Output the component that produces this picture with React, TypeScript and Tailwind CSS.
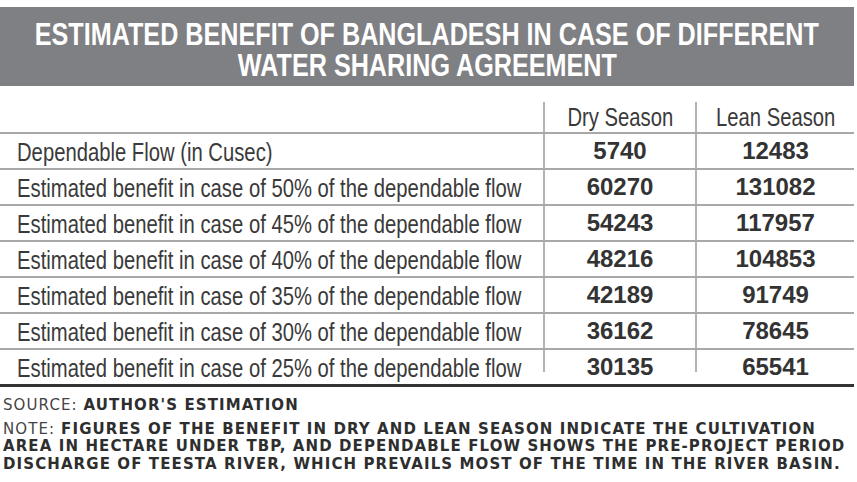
const rows: [string, string, string][] = [
  ["Dependable Flow (in Cusec)", "5740", "12483"],
  ["Estimated benefit in case of 50% of the dependable flow", "60270", "131082"],
  ["Estimated benefit in case of 45% of the dependable flow", "54243", "117957"],
  ["Estimated benefit in case of 40% of the dependable flow", "48216", "104853"],
  ["Estimated benefit in case of 35% of the dependable flow", "42189", "91749"],
  ["Estimated benefit in case of 30% of the dependable flow", "36162", "78645"],
  ["Estimated benefit in case of 25% of the dependable flow", "30135", "65541"],
];

// no condensed face installed, so the narrow look is a horizontal squeeze
const cond = "inline-block whitespace-nowrap font-['Liberation_Sans',sans-serif]";
const numFont = "font-['Liberation_Sans',sans-serif] font-bold text-[24px] text-[#333333]";

function App(): JSX.Element {
  const last = rows.length - 1;
  return (
    <div className="h-[482px] w-[857px] overflow-hidden bg-white text-[#3a3a3a]">
      <div className="mt-[7px] flex h-[79px] w-[854px] flex-col items-center bg-[#7f8083] pt-[12px] text-[31px] font-bold leading-[31px] text-white">
        <span className={`${cond} origin-center scale-x-[0.812]`}>
          ESTIMATED BENEFIT OF BANGLADESH IN CASE OF DIFFERENT
        </span>
        <span className={`${cond} origin-center scale-x-[0.812]`}>WATER SHARING AGREEMENT</span>
      </div>

      <div className="w-[854px]">
        <div className="flex h-[46px] items-end">
          <div className="w-[543px] shrink-0" />
          <div className="flex h-[30px] w-[152px] shrink-0 items-end justify-center border-l-2 border-[#b3b3b3] text-[25px] leading-[30px]">
            <span className={`${cond} origin-center scale-x-[0.81]`}>Dry Season</span>
          </div>
          <div className="flex h-[30px] flex-1 items-end justify-center border-l-2 border-[#b3b3b3] text-[25px] leading-[30px]">
            <span className={`${cond} origin-center scale-x-[0.81]`}>Lean Season</span>
          </div>
        </div>

        {rows.map(([label, dry, lean], i) => (
          <div
            key={label}
            className={`flex h-[36px] border-t-2 border-[#a8a8a8] ${i === last ? "items-start" : "items-stretch"}`}
          >
            <div className="w-[543px] min-w-0 shrink-0 pl-[17px] text-[25px] leading-[34px]">
              <span className={`${cond} origin-left scale-x-[0.81]`}>{label}</span>
            </div>
            <div
              className={`w-[152px] shrink-0 border-l-2 border-[#b3b3b3] text-center leading-[34px] ${numFont} ${i === last ? "h-[22px]" : ""}`}
            >
              {dry}
            </div>
            <div
              className={`flex-1 border-l-2 border-[#b3b3b3] text-center leading-[34px] ${numFont} ${i === last ? "h-[22px]" : ""}`}
            >
              {lean}
            </div>
          </div>
        ))}
        <div className="h-[3px] bg-[#333333]" />
      </div>

      <div className="pl-[3px] pt-[10px] font-['DejaVu_Sans',sans-serif] text-[15px] leading-[17.5px] tracking-[1.1px] text-[#2e2e2e]">
        <p className="whitespace-nowrap">
          <span className="text-[#444444]">SOURCE:</span> <span className="font-bold">AUTHOR'S ESTIMATION</span>
        </p>
        <p className="mt-[6px] whitespace-nowrap">
          <span className="text-[#444444]">NOTE:</span>{" "}
          <span className="font-bold">
            FIGURES OF THE BENEFIT IN DRY AND LEAN SEASON INDICATE THE CULTIVATION
            <br />
            AREA IN HECTARE UNDER TBP, AND DEPENDABLE FLOW SHOWS THE PRE-PROJECT PERIOD
            <br />
            DISCHARGE OF TEESTA RIVER, WHICH PREVAILS MOST OF THE TIME IN THE RIVER BASIN.
          </span>
        </p>
      </div>
    </div>
  );
}

export default App;
